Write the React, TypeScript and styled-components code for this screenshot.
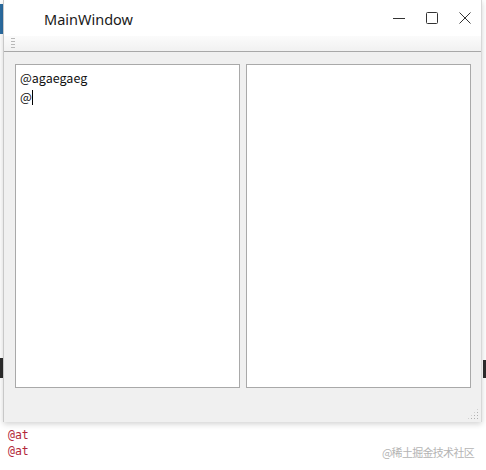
import React from 'react';
import styled, { createGlobalStyle } from 'styled-components';

const GlobalStyle = createGlobalStyle`
  html, body {
    margin: 0;
    padding: 0;
    background: #ffffff;
  }
  #root {
    width: 486px;
    height: 470px;
    overflow: hidden;
  }
`;

const PageEl = styled.div`
  position: relative;
  width: 486px;
  height: 470px;
  background: #ffffff;
`;

// slivers of the editor behind the window
const BackdropEl = styled.div<{ $left?: number; $right?: number; $top: number; $h: number; $color: string }>`
  position: absolute;
  ${(p) => (p.$left !== undefined ? `left: ${p.$left}px;` : '')}
  ${(p) => (p.$right !== undefined ? `right: ${p.$right}px;` : '')}
  top: ${(p) => p.$top}px;
  width: 3px;
  height: ${(p) => p.$h}px;
  background: ${(p) => p.$color};
`;

const WindowEl = styled.div`
  position: relative;
  z-index: 1;
  margin-left: 3px;
  width: 479px;
  height: 422px;
  display: flex;
  flex-direction: column;
  background: #f0f0f0;
  box-shadow: 0 2px 6px rgba(0, 0, 0, 0.18);
  border-left: 1px solid #c8c8c8;
  border-right: 1px solid #d8d8d8;
  box-sizing: border-box;
`;

const TitleBarEl = styled.div`
  height: 36px;
  display: flex;
  align-items: center;
  background: #ffffff;
  padding-left: 40px;
`;

const TitleEl = styled.div`
  flex: 1;
  font-family: 'Noto Sans', sans-serif;
  font-size: 14.5px;
  color: #1a1a1a;
  padding-top: 1px;
`;

const CaptionButtonEl = styled.div`
  width: 33px;
  height: 36px;
  display: flex;
  align-items: center;
  justify-content: center;
  color: #333;
`;

const ToolBarEl = styled.div`
  height: 15px;
  background: linear-gradient(#fbfbfb, #f1f1f1);
  border-bottom: 1px solid #a8a8a8;
  display: flex;
  align-items: center;
  padding-left: 7px;
`;

const GripEl = styled.div`
  width: 4px;
  height: 13px;
  background-image: radial-gradient(circle, #b8b8b8 0.8px, transparent 1px);
  background-size: 2px 3px;
`;

const CentralEl = styled.div`
  flex: 1;
  display: flex;
  gap: 6px;
  padding: 12px 10px 0 11px;
`;

const EditEl = styled.div`
  flex: 1;
  height: 324px;
  box-sizing: border-box;
  background: #ffffff;
  border: 1px solid #a9a9a9;
  padding: 3px 4px;
  font-family: 'Noto Sans CJK SC', 'Noto Sans', sans-serif;
  font-size: 12.5px;
  line-height: 19px;
  color: #111;
`;

const CaretEl = styled.span`
  display: inline-block;
  width: 1px;
  height: 15px;
  background: #000;
  vertical-align: -3px;
`;

const StatusBarEl = styled.div`
  height: 33px;
  display: flex;
  justify-content: flex-end;
  align-items: flex-end;
  padding: 0 2px 2px 0;
`;

const SizeGripEl = styled.div`
  width: 12px;
  height: 12px;
  background-image: radial-gradient(circle, #b0b0b0 0.8px, transparent 1px);
  background-size: 3px 3px;
  clip-path: polygon(100% 0, 100% 100%, 0 100%);
`;

const ConsoleEl = styled.div`
  padding: 5px 0 0 8px;
  font-family: 'DejaVu Sans Mono', monospace;
  font-size: 11.5px;
  line-height: 16px;
  color: #b3283a;
`;

const WatermarkEl = styled.div`
  position: absolute;
  right: 12px;
  bottom: 10px;
  font-family: 'Noto Sans CJK SC', sans-serif;
  font-size: 11px;
  letter-spacing: -0.7px;
  color: #b4b4b4;
`;

export default function App() {
  return (
    <PageEl>
      <GlobalStyle />
      <BackdropEl $left={0} $top={4} $h={30} $color="#2c6ea3" />
      <BackdropEl $left={0} $top={358} $h={20} $color="#2d2d2d" />
      <BackdropEl $right={0} $top={360} $h={18} $color="#2d2d2d" />
      <WindowEl>
        <TitleBarEl>
          <TitleEl>MainWindow</TitleEl>
          <CaptionButtonEl>
            <svg width="12" height="12" viewBox="0 0 12 12">
              <line x1="0" y1="6.5" x2="12" y2="6.5" stroke="#333" strokeWidth="1" />
            </svg>
          </CaptionButtonEl>
          <CaptionButtonEl>
            <svg width="12" height="12" viewBox="0 0 12 12">
              <rect x="0.5" y="0.5" width="11" height="11" rx="1" fill="none" stroke="#333" strokeWidth="1" />
            </svg>
          </CaptionButtonEl>
          <CaptionButtonEl>
            <svg width="12" height="12" viewBox="0 0 12 12">
              <path d="M0.5 0.5 L11.5 11.5 M11.5 0.5 L0.5 11.5" stroke="#333" strokeWidth="1" />
            </svg>
          </CaptionButtonEl>
        </TitleBarEl>
        <ToolBarEl>
          <GripEl />
        </ToolBarEl>
        <CentralEl>
          <EditEl>
            @agaegaeg
            <br />
            @<CaretEl />
          </EditEl>
          <EditEl />
        </CentralEl>
        <StatusBarEl>
          <SizeGripEl />
        </StatusBarEl>
      </WindowEl>
      <ConsoleEl>
        <div>@at</div>
        <div>@at</div>
      </ConsoleEl>
      <WatermarkEl>@稀土掘金技术社区</WatermarkEl>
    </PageEl>
  );
}
